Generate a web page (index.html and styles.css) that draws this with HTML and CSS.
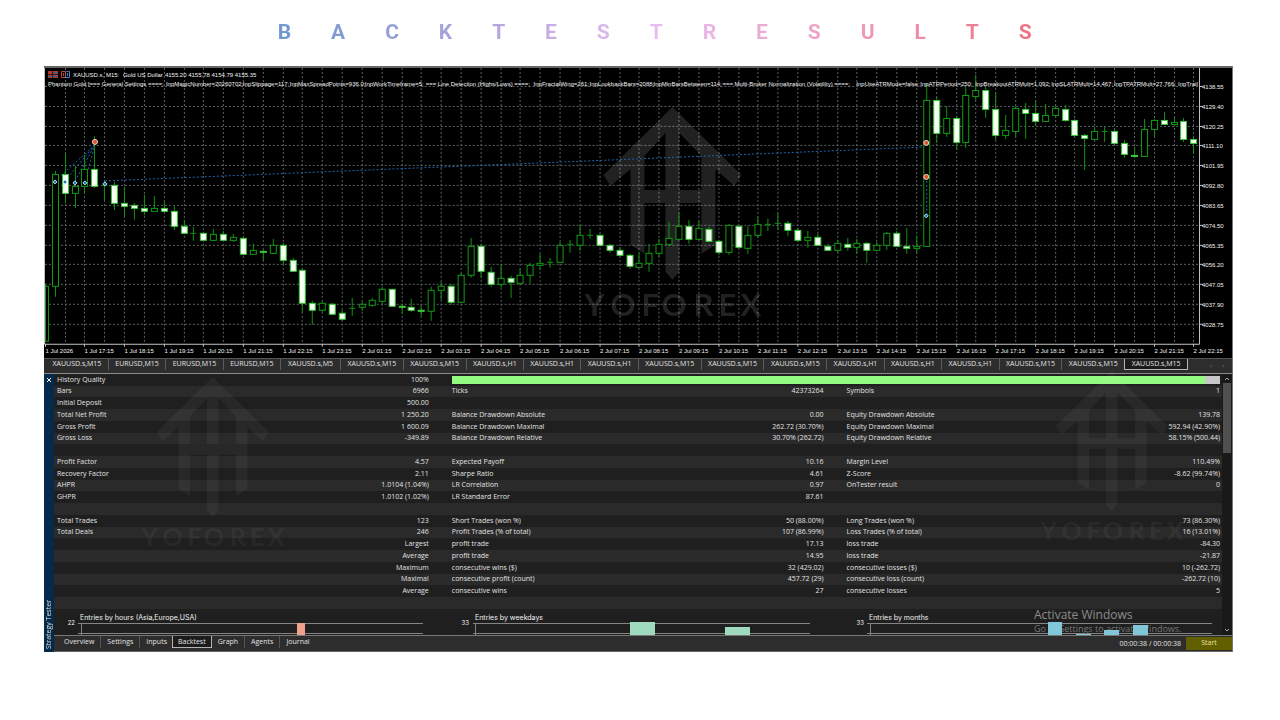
FILE: index.html
```html
<!DOCTYPE html>
<html lang="en">
<head>
<meta charset="utf-8">
<title>Backtest Results</title>
<link rel="stylesheet" href="styles.css">
</head>
<body>
<svg class="defs" aria-hidden="true">
  <symbol id="mark" viewBox="582 106 184 222">
    <path d="M673 107 L742 175 L735 186 L716 169 V245 L702 254 V156 L680 133 V272 L673 280 L666 272 V133 L645 156 V254 L631 245 V169 L611 186 L604 175 Z M645 190 V203 H666 V190 Z M680 190 V203 H702 V190 Z" fill-rule="nonzero"/>
    <text class="mark-text" y="316" x="585 611 642 662 694 719 741">YOFOREX</text>
  </symbol>
</svg>

<h1 class="title" aria-label="Backtest Results">
  <span>B</span><span>A</span><span>C</span><span>K</span><span>T</span><span>E</span><span>S</span><span>T</span><span>R</span><span>E</span><span>S</span><span>U</span><span>L</span><span>T</span><span>S</span>
</h1>

<main class="terminal">
  <svg class="chart" id="chart" viewBox="44 66 1189 292" role="img" aria-label="XAUUSD.s M15 price chart"></svg>

  <nav class="chart-tabs">
    <div class="chart-tab-list">
      <button class="t-m15">XAUUSD.s,M15</button><button class="t-eur">EURUSD,M15</button><button class="t-eur">EURUSD,M15</button><button class="t-eur">EURUSD,M15</button><button class="t-m5">XAUUSD.s,M5</button><button class="t-m15">XAUUSD.s,M15</button><button class="t-m15">XAUUSD.s,M15</button><button class="t-h1">XAUUSD.s,H1</button><button class="t-h1">XAUUSD.s,H1</button><button class="t-h1">XAUUSD.s,H1</button><button class="t-m15">XAUUSD.s,M15</button><button class="t-m15">XAUUSD.s,M15</button><button class="t-m15">XAUUSD.s,M15</button><button class="t-h1">XAUUSD.s,H1</button><button class="t-h1">XAUUSD.s,H1</button><button class="t-h1">XAUUSD.s,H1</button><button class="t-m15">XAUUSD.s,M15</button><button class="t-m15 before-active">XAUUSD.s,M15</button><button class="t-m15 active">XAUUSD.s,M15</button>
    </div>
    <div class="chart-tab-arrows"><button aria-label="Scroll left">‹</button><button aria-label="Scroll right">›</button></div>
  </nav>

  <section class="tester">
    <aside class="strip">
      <button class="close" aria-label="Close"><svg viewBox="0 0 6 6"><path d="M1 1 L5 5 M5 1 L1 5"/></svg></button>
      <span class="strip-name">Strategy Tester</span>
    </aside>
    <div class="body">
      <div class="report">
        <div class="content">
          <table class="stats">
            <colgroup><col class="c1"><col class="c2"><col class="c3"><col class="c4"><col class="c5"><col class="c6"></colgroup>
            <tbody>
            <tr><td>History Quality</td><td>100%</td><td colspan="4" class="quality"><div class="bar"><div class="bar-fill"></div></div></td></tr>
            <tr><td>Bars</td><td>6966</td><td>Ticks</td><td>42373264</td><td>Symbols</td><td>1</td></tr>
            <tr><td>Initial Deposit</td><td>500.00</td><td></td><td></td><td></td><td></td></tr>
            <tr><td>Total Net Profit</td><td>1 250.20</td><td>Balance Drawdown Absolute</td><td>0.00</td><td>Equity Drawdown Absolute</td><td>139.78</td></tr>
            <tr><td>Gross Profit</td><td>1 600.09</td><td>Balance Drawdown Maximal</td><td>262.72 (30.70%)</td><td>Equity Drawdown Maximal</td><td>592.94 (42.90%)</td></tr>
            <tr><td>Gross Loss</td><td>-349.89</td><td>Balance Drawdown Relative</td><td>30.70% (262.72)</td><td>Equity Drawdown Relative</td><td>58.15% (500.44)</td></tr>
            <tr><td></td><td></td><td></td><td></td><td></td><td></td></tr>
            <tr><td>Profit Factor</td><td>4.57</td><td>Expected Payoff</td><td>10.16</td><td>Margin Level</td><td>110.49%</td></tr>
            <tr><td>Recovery Factor</td><td>2.11</td><td>Sharpe Ratio</td><td>4.61</td><td>Z-Score</td><td>-8.62 (99.74%)</td></tr>
            <tr><td>AHPR</td><td>1.0104 (1.04%)</td><td>LR Correlation</td><td>0.97</td><td>OnTester result</td><td>0</td></tr>
            <tr><td>GHPR</td><td>1.0102 (1.02%)</td><td>LR Standard Error</td><td>87.61</td><td></td><td></td></tr>
            <tr><td></td><td></td><td></td><td></td><td></td><td></td></tr>
            <tr><td>Total Trades</td><td>123</td><td>Short Trades (won %)</td><td>50 (88.00%)</td><td>Long Trades (won %)</td><td>73 (86.30%)</td></tr>
            <tr><td>Total Deals</td><td>246</td><td>Profit Trades (% of total)</td><td>107 (86.99%)</td><td>Loss Trades (% of total)</td><td>16 (13.01%)</td></tr>
            <tr><td></td><td>Largest</td><td>profit trade</td><td>17.13</td><td>loss trade</td><td>-84.30</td></tr>
            <tr><td></td><td>Average</td><td>profit trade</td><td>14.95</td><td>loss trade</td><td>-21.87</td></tr>
            <tr><td></td><td>Maximum</td><td>consecutive wins ($)</td><td>32 (429.02)</td><td>consecutive losses ($)</td><td>10 (-262.72)</td></tr>
            <tr><td></td><td>Maximal</td><td>consecutive profit (count)</td><td>457.72 (29)</td><td>consecutive loss (count)</td><td>-262.72 (10)</td></tr>
            <tr><td></td><td>Average</td><td>consecutive wins</td><td>27</td><td>consecutive losses</td><td>5</td></tr>
            <tr><td></td><td></td><td></td><td></td><td></td><td></td></tr>
            </tbody>
          </table>
          <svg class="entries" viewBox="54 609 1168 26" role="img" aria-label="Entries by hours, weekdays and months">
            <g class="axis">
              <path d="M78 623.5 H423 M78 633.5 H423 M81.5 623 V635"/>
              <path d="M473 623.5 H810 M473 633.5 H810 M475.5 623 V635"/>
              <path d="M867 623.5 H1212 M867 633.5 H1212 M870.5 623 V635"/>
            </g>
            <g class="entry-text">
              <text x="80" y="620">Entries by hours (Asia,Europe,USA)</text>
              <text x="475" y="620">Entries by weekdays</text>
              <text x="869" y="620">Entries by months</text>
              <g text-anchor="end"><text class="small" x="75" y="625">22</text><text class="small" x="469" y="625">33</text><text class="small" x="864" y="625">33</text></g>
            </g>
            <g class="activate"><text class="activate-head" x="1034" y="619">Activate Windows</text><text x="1034" y="632">Go to Settings to activate Windows.</text></g>
            <rect class="hours" x="297" y="623" width="8" height="12"/>
            <rect class="days" x="630" y="622" width="25" height="13"/><rect class="days" x="725" y="627" width="25" height="8"/>
            <rect class="months" x="1048" y="622" width="14" height="13"/><rect class="months" x="1076" y="634" width="15" height="1"/><rect class="months" x="1104" y="630" width="15" height="5"/><rect class="months" x="1133" y="625" width="15" height="10"/>
          </svg>
        </div>
        <div class="scroll"><svg viewBox="0 0 8 8"><path d="M2 5 L4 3 L6 5"/></svg><div class="thumb"></div><svg viewBox="0 0 8 8"><path d="M2 3 L4 5 L6 3"/></svg></div>
      </div>
      <footer class="bottom">
        <nav class="tester-tabs"><button>Overview</button><button>Settings</button><button class="no-rule">Inputs</button><button class="active">Backtest</button><button>Graph</button><button>Agents</button><button>Journal</button></nav>
        <span class="time">00:00:38 / 00:00:38</span>
        <button class="start">Start</button>
      </footer>
    </div>
    <svg class="wm wm-left" aria-hidden="true"><use href="#mark"/></svg>
    <svg class="wm wm-right" aria-hidden="true"><use href="#mark"/></svg>
  </section>
</main>
<script src="chart.js"></script>
</body>
</html>
```
FILE: styles.css
```css
* { box-sizing: border-box; }
body { margin: 0; background: #fff; font-family: "Open Sans", "Noto Sans", sans-serif; font-size: 7px; color: #e2e2e2; }
button { margin: 0; padding: 0; border: 0; background: none; color: inherit; font: inherit; white-space: nowrap; }
.defs { position: absolute; width: 0; height: 0; }

.title { display: flex; justify-content: space-between; margin: 0 19% 0 21.7%; padding: 18px 5px 20px 0; font: bold 21px/28px Roboto, sans-serif; background: linear-gradient(90deg, #6f97cf, #b3a6dc 28%, #e9bdf2 50%, #ee9dbd 75%, #f07080); -webkit-background-clip: text; background-clip: text; color: transparent; }

.terminal { margin: 0 47px 0 44px; border-right: 1px solid #777; background: #2d2d2d; }
.chart { display: block; width: 100%; background: #000; }
.chart text { font: 6px "Liberation Sans", sans-serif; fill: #f2f2f2; }
.grid { stroke: #5c6367; stroke-width: 1; stroke-dasharray: 2 2; fill: none; }
.frame { stroke: #c4c4c4; fill: none; }
.wick { stroke: #109310; stroke-width: 1; }
.up { fill: #000; stroke: #129b12; stroke-width: 1; }
.down { fill: #f7fff4; stroke: #35c635; stroke-width: 1; }
.deal { stroke: #1c66ae; stroke-width: 1; stroke-dasharray: 2 2; fill: none; }
.sell { fill: #d9512c; stroke: #f5d7cd; }
.buy { fill: #1d6cb5; stroke: #c4dff5; }
.chart .mark-text, .mark-text { font: bold 31px Lato, sans-serif; fill: inherit; }
.chart .watermark { fill: #fff; opacity: .13; }

.chart-tabs { display: flex; height: 16px; border-top: 1px solid #555; border-bottom: 1px solid #8a8a8a; }
.chart-tab-list { display: flex; flex: 1; align-items: flex-start; padding-left: 2px; }
.chart-tab-list button { height: 11px; line-height: 10px; text-align: center; flex-basis: 0; }
.chart-tab-list button:not(.active):not(.before-active) { border-right: 1px solid #5c5c5c; }
.chart-tab-list .t-m15 { flex-grow: 126; }
.chart-tab-list .t-eur { flex-grow: 115; }
.chart-tab-list .t-m5 { flex-grow: 120; }
.chart-tab-list .t-h1 { flex-grow: 115; }
.chart-tab-list .active { border: 1px solid #b5b5b5; border-top: 0; background: #1c1c1c; }
.chart-tab-arrows { display: flex; justify-content: space-between; width: 44px; padding: 0 8px 0 22px; color: #707070; }

.tester { position: relative; display: flex; }
.strip { display: flex; flex-direction: column; justify-content: space-between; align-items: center; width: 10px; background: #052a4a; padding: 3px 0; }
.close, .close svg { display: block; width: 6px; height: 6px; }
.close svg { stroke: #fff; fill: none; }
.strip-name { writing-mode: vertical-rl; transform: rotate(180deg); line-height: 10px; }
.body { flex: 1; min-width: 0; }
.report { display: flex; background: #1f1f1f; border-bottom: 1px solid #777; }
.content { flex: 1; min-width: 0; }
.stats { width: 100%; height: 235px; table-layout: fixed; border-collapse: collapse; }
.stats tr { height: 5%; }
.stats td { padding: 0 0 0 3px; line-height: 10px; white-space: nowrap; }
.stats tr:nth-child(even) { background: #2a2a2a; }
.stats td:nth-child(even) { text-align: right; padding: 0 20px 0 0; }
.stats td:nth-child(6) { padding-right: 2px; }
.c1, .c2, .c3, .c4 { width: 16.9%; }
.c5, .c6 { width: 16.2%; }
.bar { height: 8px; margin-right: 2px; background: #c8c8c8; }
.bar-fill { width: 98%; height: 100%; background: #93fb80; }
.entries { display: block; width: 100%; }
.axis { stroke: #858585; fill: none; }
.entry-text { font: 7px Inter, sans-serif; fill: #f0f0f0; }
.small { font-size: 6px; }
.activate { font-size: 9px; fill: #777; }
.activate-head { font-size: 12px; fill: #8c8c8c; }
.hours { fill: #f0a18e; }
.days { fill: #9fdabf; }
.months { fill: #82c6da; }
.scroll { display: flex; flex-direction: column; width: 10px; background: #191919; padding: 1px; }
.scroll svg { width: 8px; height: 8px; fill: none; stroke: #aaa; }
.thumb { height: 70px; margin-bottom: auto; background: #505050; }

.bottom { display: flex; align-items: flex-start; height: 16px; border-bottom: 1px solid #666; }
.tester-tabs { display: flex; flex: 1; padding-left: 4px; }
.tester-tabs button { padding: 0 6px; height: 12px; line-height: 12px; border-right: 1px solid #555; }
.tester-tabs .no-rule { padding-right: 5px; border-right: 0; }
.tester-tabs .active { padding: 0 5px; border: 1px solid #b5b5b5; border-top: 0; background: #1c1c1c; }
.tester-tabs button:last-child { border: 0; }
.time { line-height: 15px; padding-right: 5px; }
.start { width: 46px; height: 13px; margin-top: 1px; line-height: 12px; background: #625f00; color: #e8e4a0; }

.wm { position: absolute; width: 149px; height: 180px; fill: #fff; opacity: .04; pointer-events: none; }
.wm-left { left: 8%; top: 2px; }
.wm-right { left: 83.7%; top: -4px; }
```
FILE: chart.js
```js
// Each candle: [high, body top, body bottom, low, kind]; kind is u (hollow), d (filled) or x (cross)
const candles = `285 286 341 342 u|171 174 286 297 u|153 174 193 203 d|166 186 193 208 u|155 169 186 194 u|136 169 186 188 d|181 185 185 200 x|182 185 203 210 d|187 203 206 217 d|203 205 208 220 d|195 208 211 215 d|196 208 211 211 u|202 208 211 213 d|206 211 226 230 d|221 226 233 234 d|227 233 233 241 x|232 233 240 241 d|229 234 240 240 u|231 234 240 241 d|234 237 240 242 u|237 238 254 254 d|244 250 254 255 u|250 251 252 261 d|239 245 253 254 u|243 245 260 265 d|258 260 271 272 d|269 270 303 313 d|301 303 310 325 d|302 303 310 312 u|303 304 314 315 d|310 313 319 321 d|298 308 308 316 x|302 304 307 311 u|298 300 305 307 u|287 289 301 304 u|289 289 306 307 d|304 306 307 314 d|299 307 310 312 d|306 310 311 316 d|287 290 311 321 u|282 286 290 300 u|284 286 302 305 d|273 275 302 303 u|238 246 275 278 u|244 246 271 278 d|267 272 284 287 d|265 278 284 288 u|276 278 282 298 d|269 275 283 284 u|263 265 275 284 u|254 263 265 270 u|258 262 262 268 x|242 245 262 263 u|240 244 244 253 x|225 235 245 251 u|229 235 235 239 x|234 235 245 247 d|244 245 250 253 d|247 250 255 256 d|254 255 266 269 d|253 263 267 268 u|244 253 263 272 u|239 244 253 257 u|222 238 244 245 u|213 226 239 240 u|220 226 239 244 d|221 228 239 240 u|227 229 241 242 d|240 241 252 255 d|224 225 252 255 u|225 226 247 249 d|226 235 248 254 u|217 224 235 238 u|219 224 224 231 x|213 223 223 230 x|221 223 230 236 d|228 230 240 242 d|231 237 240 248 u|234 237 245 246 d|244 246 250 251 d|240 243 250 253 u|238 244 247 251 d|239 243 247 254 u|242 243 250 263 d|242 245 250 251 u|232 233 245 250 u|231 233 246 247 d|228 246 248 254 d|236 246 248 254 u|83 100 246 247 u|97 100 133 143 d|106 118 133 137 u|116 118 142 150 d|87 95 142 148 u|75 90 96 100 u|87 90 109 118 d|93 109 135 140 d|115 130 135 139 u|106 108 131 137 u|103 109 113 139 d|101 113 121 126 d|104 115 121 122 u|106 108 115 117 u|105 109 120 122 d|119 120 135 136 d|134 135 138 170 d|127 131 139 140 u|127 131 131 142 x|129 131 143 146 d|140 143 154 158 d|147 155 156 158 d|119 129 156 157 u|119 120 129 136 u|112 120 124 125 d|117 122 124 126 u|118 121 139 142 d|138 139 143 154 d`.split("|").map(s => s.split(" "));

const params = [[48, "Phantom Gold [=== General Settings ====;"], [166, "InpMagicNumber=20260702;"], [243, "InpSlippage=117;"], [290, "InpMaxSpreadPoints=936.0;"], [365, "InpWorkTimeframe=5;"], [426, "=== Line Detection (Highs/Lows) ====;"], [534, "InpFractalWing=261;"], [590, "InpLookbackBars=2088;"], [654, "InpMinBarsBetween=114;"], [723, "=== Multi-Broker Normalization (Volatility) ====;"], [857, "InpUseATRMode=false;"], [921, "InpATRPeriod=250;"], [976, "InpBreakoutATRMult=1.092;"], [1052, "InpSLATRMult=14.467;"], [1115, "InpTPATRMult=27.766;"], [1179, "InpTrail"]];

const step = 1149.6 / 116;
const x = i => Math.floor(45.3 + i * step) + .5;
const text = (tx, ty, s) => `<text x="${tx}" y="${ty}">${s}</text>`;
let out = "";

for (let i = 2; i <= 116; i += 2) out += `<path class="grid" d="M${x(i)} 68V344"/>`;
for (let k = 0; k < 13; k++) {
  const y = Math.round(87 + k * 19.83);
  out += `<path class="grid" d="M45 ${y - .5}H1200"/><path class="frame" d="M1200 ${y - .5}H1204"/>`;
  out += text(1203, y + 2, (4138.55 - k * 9.15).toFixed(2));
}
out += `<svg class="watermark" x="582" y="106" width="184" height="222"><use href="#mark"/></svg>`;
out += `<path class="frame" d="M44.5 68V344.5H1200.5V68"/><path d="M44 67H1233" stroke="#666" stroke-width="2"/>`;

for (let i = 0; i < 30; i++) {
  const label = i === 0 ? "1 Jul 2026" : i < 8 ? `1 Jul ${16 + i}:15` : `2 Jul ${String(i - 7).padStart(2, "0")}:15`;
  out += `<path class="frame" d="M${x(i * 4)} 344V347"/>` + text(x(i * 4), 353, label);
}

out += `<path class="deal" d="M105 181L927 147M55 181L95 145M65 181L95 145M75 181L95 145M85 181L95 145"/>`;
candles.forEach(([h, t, b, l, kind], i) => {
  const cx = x(i);
  out += `<path class="wick" d="M${cx} ${h}V${l}"/>`;
  if (kind === "x") out += `<path class="wick" d="M${cx - 3} ${+t + .5}h6"/>`;
  else out += `<rect class="${kind === "u" ? "up" : "down"}" x="${i ? cx - 3 : cx}" y="${+t + .5}" width="${i ? 6 : 3}" height="${Math.max(1, b - t)}"/>`;
});
out += `<path class="deal" d="M927.5 177V216"/>`;
[[95, 142], [927, 143], [927, 177]].forEach(([a, b]) => out += `<circle class="sell" cx="${a}" cy="${b}" r="2.5"/>`);
[[55, 182], [65, 182], [75, 183], [85, 183], [105, 184], [927, 216]].forEach(([a, b]) => out += `<path class="buy" d="M${a} ${b - 2}l2 2l-2 2l-2 -2z"/>`);

out += `<g stroke-width="1"><rect x="48" y="71" width="10" height="7" fill="#b43a2c"/><path d="M53 72.500H58M53 74.500H58M48 76.500H58" stroke="#35609a"/><path d="M52.500 71V78M48 74.500H58" stroke="#222"/><path d="M61.500 71.500h4v6h-4zM63.500 73V76" stroke="#c9493a" fill="none"/><path d="M66.500 71.500h3v6h-5M67.500 73v3" stroke="#3d83cf" fill="none"/></g>`;
out += text(73, 77, "XAUUSD.s, M15:") + text(123, 77, "Gold US Dollar") + text(165, 77, "4155.20 4155.78 4154.79 4155.35");
out += params.map(p => text(p[0], 86, p[1])).join("");

document.getElementById("chart").innerHTML = out;
```
